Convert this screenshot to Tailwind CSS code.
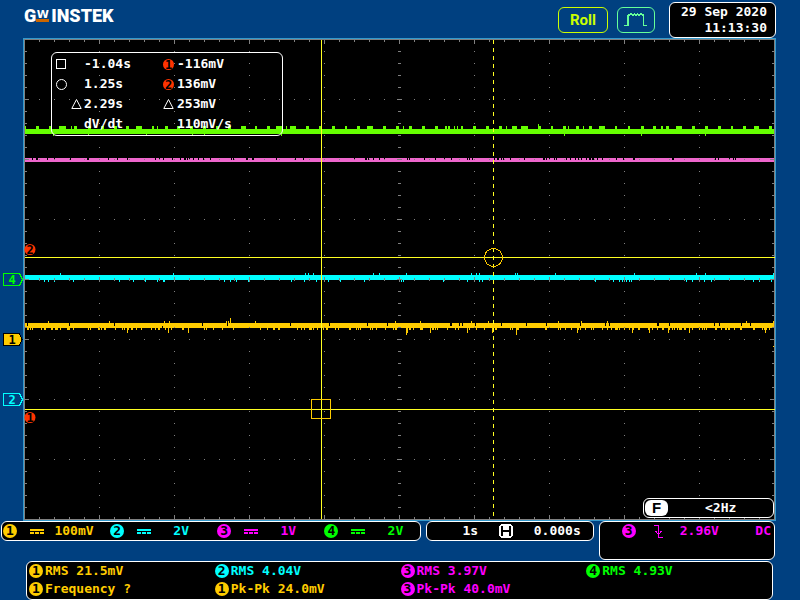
<!DOCTYPE html>
<html lang="en">
<head>
  <meta charset="UTF-8" />
  <meta name="viewport" content="width=device-width, initial-scale=1.0"/>
  <title>GW Instek - Roll</title>
  <script src="https://cdn.jsdelivr.net/npm/@tailwindcss/browser@4"></script>
</head>
<body class="bg-[#004080] text-white text-[13px] leading-[18px] font-bold font-['DejaVu_Sans_Mono','Liberation_Mono',monospace]">

  <!-- HEADER -->
  <header class="h-[38px] flex items-start justify-between pl-6 pr-6">
    <h1 class="flex pt-[7px] font-['Roboto',sans-serif] font-black text-[18px] leading-[18px]" aria-label="GW INSTEK">
      <span>G</span>
      <span class="w-[13px] mt-[3px] mr-0.5 h-3 border-b-3 border-[#cc6600] flex justify-center font-['DejaVu_Sans',sans-serif] text-[11px] leading-[9px]">W</span>
      <span>INSTEK</span>
    </h1>
    <div class="flex items-start">
      <button class="mt-[7px] w-[50px] h-[26px] border border-[#ccff00] rounded-md text-[#ccff00] font-['Roboto',sans-serif] text-[15px] leading-6 font-bold">Roll</button>
      <button class="mt-[7px] ml-[9px] w-[38px] h-[26px] border border-[#66ff99] rounded-md flex items-center justify-center" aria-label="Acquisition mode">
        <svg width="24" height="16" viewBox="0 0 24 16" fill="#66ff99" shape-rendering="crispEdges">
          <path d="M0 13h5v1H0zM3 3h2v11H3zM4 2h2v2H4zM6 1h2v2H6zM8 2h2v2H8zM10 1h1v2h-1zM11 2h2v2h-2zM13 1h1v2h-1zM14 2h2v2h-2zM16 1h2v2h-2zM18 2h2v2h-2zM19 3h1v11h-1zM19 13h4v1h-4z"/>
        </svg>
      </button>
      <div class="mt-0.5 ml-[14px] w-[107px] h-9 bg-black border border-white rounded-md pr-2 pt-px text-right leading-4 whitespace-nowrap">
        <p>29 Sep 2020</p>
        <p>11:13:30</p>
      </div>
    </div>
  </header>

  <!-- DISPLAY -->
  <main class="relative">
    <svg class="block w-full" viewBox="0 38 800 483" shape-rendering="crispEdges">
      <rect x="23" y="38" width="753" height="483" fill="#3399cc"/>
      <rect x="24" y="39" width="751" height="481" fill="#808080"/>
      <rect x="25" y="40" width="749" height="479" fill="#000"/>

      <!-- traces -->
      <path id="ch4" fill="#66ff00"/>
      <path id="ch3" fill="#ee66cc"/>
      <path id="ch2" fill="#00ffff"/>
      <path id="ch1" fill="#ffcc00"/>
      <path id="gaps" fill="#000"/>
      <path id="grid" fill="#808080"/>

      <!-- cursors -->
      <g stroke="#ffff22" fill="none">
        <path d="M25 257.5H775M25 409.5H775M321.5 40V519"/>
        <path d="M493.5 40V519" stroke-dasharray="4 4"/>
      </g>
      <g stroke="#ffcc00" fill="none">
        <rect x="311.5" y="399.5" width="19" height="19"/>
        <circle cx="493.5" cy="257.5" r="9"/>
      </g>

      <!-- cursor tags -->
      <g text-anchor="middle" font-size="12" font-weight="bold" shape-rendering="auto">
        <circle cx="30" cy="249.500" r="5.500" fill="#ff3300"/>
        <text x="30" y="254" fill="#000">2</text>
        <circle cx="30" cy="417.500" r="5.500" fill="#ff3300"/>
        <text x="30" y="422" fill="#000">1</text>
      </g>

      <!-- channel positions -->
      <g text-anchor="middle" font-size="12" font-weight="bold">
        <path d="M3.500 273.500H19.500L22.500 279.500L19.500 285.500H3.500Z" fill="none" stroke="#00ff00"/>
        <text x="12" y="284" fill="#00ff00">4</text>
        <path d="M3.500 333.500H19.500L22 339.500L19.500 345.500H3.500Z" fill="#ffcc00" stroke="#000"/>
        <text x="12" y="344" fill="#000">1</text>
        <path d="M3.500 393.500H19.500L22.500 399.500L19.500 405.500H3.500Z" fill="none" stroke="#00ffff"/>
        <text x="12" y="404" fill="#00ffff">2</text>
      </g>
    </svg>

    <!-- cursor readout -->
    <div class="absolute left-[51px] top-[14px] w-[232px] h-[84px] border border-white rounded-md pl-1 pt-px grid grid-cols-[28px_79px_14px_auto] auto-rows-[20px] items-center whitespace-nowrap">
      <svg width="12" height="12" fill="none" stroke="#fff" shape-rendering="crispEdges"><rect x="0.500" y="1.500" width="9" height="9"/></svg>
      <span>-1.04s</span>
      <span class="size-[11px] rounded-full bg-[#ff3300] text-black text-[12px] leading-3 text-center">1</span>
      <span>-116mV</span>

      <svg width="12" height="12" fill="none" stroke="#fff"><circle cx="5.500" cy="6.500" r="5"/></svg>
      <span>1.25s</span>
      <span class="size-[11px] rounded-full bg-[#ff3300] text-black text-[12px] leading-3 text-center">2</span>
      <span>136mV</span>

      <svg class="ml-[15px]" width="12" height="12" fill="none" stroke="#fff"><path d="M0.800 10.500L5.500 1.500L10.200 10.500Z"/></svg>
      <span>2.29s</span>
      <svg width="12" height="12" fill="none" stroke="#fff"><path d="M0.800 10.500L5.500 1.500L10.200 10.500Z"/></svg>
      <span>253mV</span>

      <span></span>
      <span>dV/dt</span>
      <span></span>
      <span>110mV/s</span>
    </div>

    <!-- frequency counter -->
    <div class="absolute right-[26px] bottom-[3px] w-[131px] h-5 bg-black border border-white rounded-md flex items-center pl-px">
      <span class="w-[23px] h-4 rounded-md bg-white text-black text-center text-[15px] leading-4 font-['Liberation_Sans',sans-serif]">F</span>
      <span class="ml-[37px]">&lt;2Hz</span>
    </div>
  </main>

  <footer>
    <div class="grid grid-cols-[419fr_168fr_176fr] gap-x-[5px] items-start pl-px pr-[25px] whitespace-nowrap">
      <!-- CHANNELS -->
      <ul class="h-5 bg-black border border-white rounded-md pl-px grid grid-cols-[107fr_107fr_107fr_95fr]">
        <li class="flex items-center text-[#ffcc00]">
          <span class="size-3.5 rounded-full bg-[#ffcc00] text-black leading-[14px] text-center">1</span>
          <svg class="ml-[13px]" width="14" height="5" fill="currentColor"><path d="M0 0h14v2H0zM0 3h4v2H0zM5 3h4v2H5zM10 3h4v2H10z"/></svg>
          <span class="ml-[10px] w-10 text-center">100mV</span>
        </li>
        <li class="flex items-center text-[#00ffff]">
          <span class="size-3.5 rounded-full bg-[#00ffff] text-black leading-[14px] text-center">2</span>
          <svg class="ml-[13px]" width="14" height="5" fill="currentColor"><path d="M0 0h14v2H0zM0 3h4v2H0zM5 3h4v2H5zM10 3h4v2H10z"/></svg>
          <span class="ml-[10px] w-10 text-center">2V</span>
        </li>
        <li class="flex items-center text-[#ff00ff]">
          <span class="size-3.5 rounded-full bg-[#ff00ff] text-black leading-[14px] text-center">3</span>
          <svg class="ml-[13px]" width="14" height="5" fill="currentColor"><path d="M0 0h14v2H0zM0 3h4v2H0zM5 3h4v2H5zM10 3h4v2H10z"/></svg>
          <span class="ml-[10px] w-10 text-center">1V</span>
        </li>
        <li class="flex items-center text-[#00ff00]">
          <span class="size-3.5 rounded-full bg-[#00ff00] text-black leading-[14px] text-center">4</span>
          <svg class="ml-[13px]" width="14" height="5" fill="currentColor"><path d="M0 0h14v2H0zM0 3h4v2H0zM5 3h4v2H5zM10 3h4v2H10z"/></svg>
          <span class="ml-[10px] w-10 text-center">2V</span>
        </li>
      </ul>

      <!-- TIMEBASE -->
      <div class="h-5 bg-black border border-white rounded-md flex items-center justify-between pl-9 pr-3">
        <span>1s</span>
        <svg width="14" height="14" shape-rendering="crispEdges">
          <rect width="14" height="14" rx="4" fill="#fff"/>
          <path d="M2 2h2v4h6V2h2v10h-2V8H4v4H2z" fill="#000"/>
        </svg>
        <span>0.000s</span>
      </div>

      <!-- TRIGGER -->
      <div class="h-[39px] bg-black border border-white rounded-md pl-[22px] pr-[3px] flex items-start text-[#ff00ff]">
        <span class="mt-0.5 size-3.5 rounded-full bg-[#ff00ff] text-black leading-[14px] text-center">3</span>
        <svg class="ml-[18px] mt-[3px]" width="10" height="13" fill="none" stroke="currentColor" shape-rendering="crispEdges">
          <path d="M0 .5H4.500V12.500H9M1.500 6L4.500 9.500L7.500 6"/>
        </svg>
        <span class="ml-4">2.96V</span>
        <span class="ml-auto">DC</span>
      </div>
    </div>

    <!-- MEASUREMENTS -->
    <div class="mt-px ml-[26px] mr-[27px] h-[39px] bg-black border border-white rounded-md pl-0.5 grid grid-cols-4 auto-rows-[18px] items-center whitespace-nowrap">
      <p class="flex items-center gap-0.5 text-[#ffcc00]"><span class="size-3.5 rounded-full bg-[#ffcc00] text-black leading-[14px] text-center">1</span>RMS 21.5mV</p>
      <p class="flex items-center gap-0.5 text-[#00ffff]"><span class="size-3.5 rounded-full bg-[#00ffff] text-black leading-[14px] text-center">2</span>RMS 4.04V</p>
      <p class="flex items-center gap-0.5 text-[#ff00ff]"><span class="size-3.5 rounded-full bg-[#ff00ff] text-black leading-[14px] text-center">3</span>RMS 3.97V</p>
      <p class="flex items-center gap-0.5 text-[#00ff00]"><span class="size-3.5 rounded-full bg-[#00ff00] text-black leading-[14px] text-center">4</span>RMS 4.93V</p>
      <p class="flex items-center gap-0.5 text-[#ffcc00]"><span class="size-3.5 rounded-full bg-[#ffcc00] text-black leading-[14px] text-center">1</span>Frequency ?</p>
      <p class="flex items-center gap-0.5 text-[#ffcc00]"><span class="size-3.5 rounded-full bg-[#ffcc00] text-black leading-[14px] text-center">1</span>Pk-Pk 24.0mV</p>
      <p class="flex items-center gap-0.5 text-[#ff00ff]"><span class="size-3.5 rounded-full bg-[#ff00ff] text-black leading-[14px] text-center">3</span>Pk-Pk 40.0mV</p>
    </div>
  </footer>

  <script>
    const rect = (x, y, w, h) => `M${x} ${y}h${w}v${h}h${-w}z`;
    // entries are "x" or "x:width"
    const marks = (list, y, h) => list.trim().split(/\s+/).map(m => {
      const [x, w] = m.split(':').map(Number);
      return rect(x, y, w || 1, h);
    }).join('');
    const draw = (id, d) => document.getElementById(id).setAttribute('d', d);

    draw('ch4', rect(25, 129, 749, 5)
      + marks(`25 36:3 49:3 59:7 71 74:3 88:3 101:3 114:3 126:3 136:6 152:2 157 165:3 177:3 190:3 203:3 216:3 228:3
        241:5 255:2 267:3 276:6 286 290:6 306:3 319:3 332:3 345:2 357:3 367:6 383:3 396:3 403 409:3 422:3 435:3
        445:2 448:2 454 457 461:2 473:3 486:3 499:3 506 512:5 521:7 538:3 551:2 563:3 568 576:3 583 589:3 599:6
        615:2 628:2 641:3 653:3 661:2 666:3 676:6 692:3 705:3 718:3 731:2 743:3 754:5 769:3`, 126, 3)
      + marks('538', 124, 2)
      + marks('53 88 146 192 204 281 564 641 705', 134, 2));

    draw('ch3', rect(25, 158, 749, 4));

    draw('ch2', rect(25, 275, 749, 5)
      + marks('60 173 305 308 313 373 379 406 471 476 479 515 517 555 634 696 705 773', 273, 2)
      + marks(`44 48 54 73 119 133 145 157 163:2 224 230 236 248 291 304 316 328 340 364 401 403 443 467 479 482
        595 613 619 622 626 629 631 686 692 704 711 753 759 771`, 280, 2));

    draw('ch1', rect(25, 323, 749, 5)
      + marks('48 109 164 169 226 228 230 255 395 420 471 488 558 581 607 746 773', 321, 2)
      + marks('230', 318, 3)
      + marks(`27:2 30 32 41 44:2 51:2 55:3 60 67:3 73 88 90 98:2 101 104:2 115 122 124 127:2 131:2 136 141 151 155
        158:2 165 168 171 182:2 188 204 206 213 222 233 260 267 273:2 278:2 297 301 304 309:3 313 317 323 326:2
        335 338 349:2 356 358 360 370 372 376 385 393 395:2 406:2 409:2 413 420:3 430 432:2 435 437 447 455 458
        467 469 476 484 492 495:2 510 512 516:3 545:2 558 560 565 571 577:2 580 585 591 593 602 607 611 615:3 619
        624 629 632:2 638:2 648:2 652 657 662:2 668:2 672 674 677 679:3 684:2 689 692 699 702 704 706 715:2 721
        725:2 728:2 734 740:2 753:2 762 764:3 769`, 328, 2)
      + marks('127 168 188 406:2 430 467 492 516 577 632 649 668 689 765', 330, 3)
      + marks('406 516', 333, 2)
      + marks('773', 346, 1));

    draw('gaps', marks(`32 36:2 47 54 70 87:2 108 117 127 155 159 163 172 180 184:2 187 189 193 198 203 210 231 233
        246:2 252:2 276 295 303 354 365:2 368 373 379 384 407 409 424 435 444 451 467 469 472 494 497:2 501 503
        510 524 543:2 546 549 554 556 566 570 575 578 581 586 589:2 592:2 597 602 616 623 633:2 672:2 715 718
        729 733 735`, 158, 2)
      + marks(`27 69 114 202 227 290 329 367 387 450:2 459 462 475 501 526 546 580 605 609 657:2 669 714 719
        741 750`, 323, 3)
      + marks('162', 326, 2));

    // graticule: 10 x 8 divisions of 75 x 60, split in 5 both ways
    let grid = '';
    for (let y = 51; y < 519; y += 12) {
      const major = (y - 39) % 60 === 0;
      for (let x = 99; x < 774; x += 75) if (x !== 399) grid += rect(x, y, 1, 1);
      grid += major ? rect(397, y, 5, 1) + rect(25, y, 4, 1) + rect(770, y, 4, 1)
                    : rect(398, y, 3, 1) + rect(25, y, 2, 1) + rect(772, y, 2, 1);
    }
    for (let x = 39; x < 774; x += 15) {
      const major = (x - 24) % 75 === 0;
      for (let y = 99; y < 519; y += 60) if (y !== 279) grid += rect(x, y, 1, 1);
      grid += major ? rect(x, 277, 1, 5) + rect(x, 40, 1, 4) + rect(x, 515, 1, 4)
                    : rect(x, 278, 1, 3) + rect(x, 40, 1, 2) + rect(x, 517, 1, 2);
    }
    draw('grid', grid);
  </script>
</body>
</html>
